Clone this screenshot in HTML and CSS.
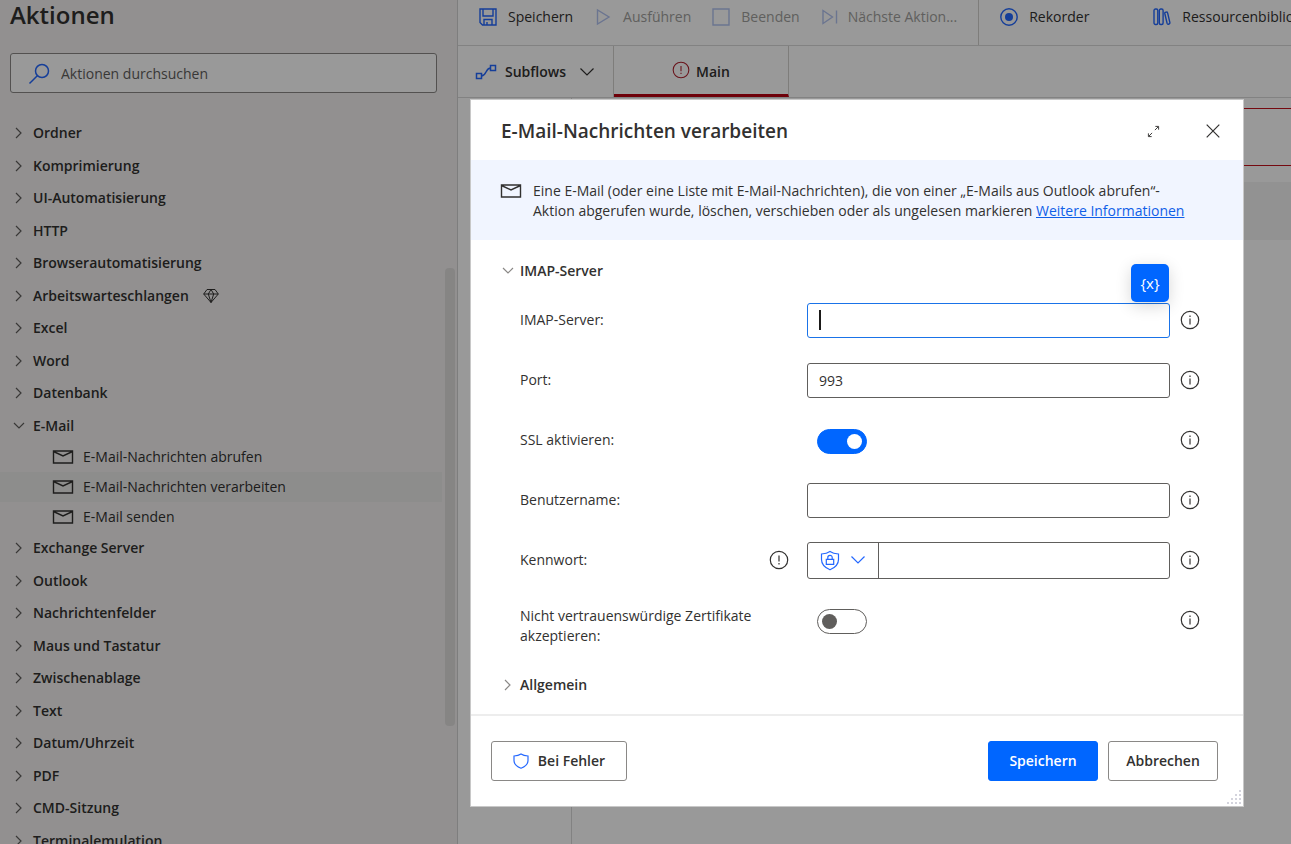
FILE: index.html
```html
<!DOCTYPE html>
<html lang="de">
<head>
<meta charset="utf-8">
<meta name="viewport" content="width=device-width, initial-scale=1">
<title>E-Mail-Nachrichten verarbeiten</title>
<link rel="stylesheet" href="styles.css">
</head>
<body>
<svg class="sprite" aria-hidden="true">
  <symbol id="chev-right" viewBox="0 0 12 12"><path d="M3 1 8 6l-5 5"/></symbol>
  <symbol id="chev-down" viewBox="0 0 12 12"><path d="M1 3 6 8l5-5"/></symbol>
  <symbol id="mail" viewBox="0 0 22 14"><path d="M1.500 1h19v12h-19zM1.500 1.500 11 6l9.500-4.500"/></symbol>
  <symbol id="info" viewBox="0 0 20 20"><circle cx="10" cy="10" r="8.700"/><path d="M10 8.500v6M10 5.500v1.500"/></symbol>
  <symbol id="warn" viewBox="0 0 20 20"><circle cx="10" cy="10" r="8.700"/><path d="M10 5.500v6M10 13v1.500"/></symbol>
</svg>

<div class="app">
  <aside class="sidebar">
    <h1 class="sidebar-title">Aktionen</h1>
    <label class="search">
      <svg class="search-icon" viewBox="0 0 22 22"><circle cx="14" cy="8" r="6.500"/><path d="M9.300 12.700 1.500 20.500"/></svg>
      <input type="search" placeholder="Aktionen durchsuchen" aria-label="Aktionen durchsuchen">
    </label>
    <ul class="tree">
      <li><button class="node"><svg class="chev"><use href="#chev-right"/></svg>Ordner</button></li>
      <li><button class="node"><svg class="chev"><use href="#chev-right"/></svg>Komprimierung</button></li>
      <li><button class="node"><svg class="chev"><use href="#chev-right"/></svg>UI-Automatisierung</button></li>
      <li><button class="node"><svg class="chev"><use href="#chev-right"/></svg>HTTP</button></li>
      <li><button class="node"><svg class="chev"><use href="#chev-right"/></svg>Browserautomatisierung</button></li>
      <li><button class="node"><svg class="chev"><use href="#chev-right"/></svg>Arbeitswarteschlangen<svg class="gem" viewBox="0 0 16 16"><path d="M4 1.500h8L15.300 6 8 14.500.7 6zM.7 6h14.600M5.300 6 8 14.500 10.700 6M5.300 6 8 1.500 10.700 6"/></svg></button></li>
      <li><button class="node"><svg class="chev"><use href="#chev-right"/></svg>Excel</button></li>
      <li><button class="node"><svg class="chev"><use href="#chev-right"/></svg>Word</button></li>
      <li><button class="node"><svg class="chev"><use href="#chev-right"/></svg>Datenbank</button></li>
      <li>
        <button class="node" aria-expanded="true"><svg class="chev"><use href="#chev-down"/></svg>E-Mail</button>
        <ul class="subtree">
          <li><button class="leaf"><svg class="mail"><use href="#mail"/></svg>E-Mail-Nachrichten abrufen</button></li>
          <li><button class="leaf selected"><svg class="mail"><use href="#mail"/></svg>E-Mail-Nachrichten verarbeiten</button></li>
          <li><button class="leaf"><svg class="mail"><use href="#mail"/></svg>E-Mail senden</button></li>
        </ul>
      </li>
      <li><button class="node"><svg class="chev"><use href="#chev-right"/></svg>Exchange Server</button></li>
      <li><button class="node"><svg class="chev"><use href="#chev-right"/></svg>Outlook</button></li>
      <li><button class="node"><svg class="chev"><use href="#chev-right"/></svg>Nachrichtenfelder</button></li>
      <li><button class="node"><svg class="chev"><use href="#chev-right"/></svg>Maus und Tastatur</button></li>
      <li><button class="node"><svg class="chev"><use href="#chev-right"/></svg>Zwischenablage</button></li>
      <li><button class="node"><svg class="chev"><use href="#chev-right"/></svg>Text</button></li>
      <li><button class="node"><svg class="chev"><use href="#chev-right"/></svg>Datum/Uhrzeit</button></li>
      <li><button class="node"><svg class="chev"><use href="#chev-right"/></svg>PDF</button></li>
      <li><button class="node"><svg class="chev"><use href="#chev-right"/></svg>CMD-Sitzung</button></li>
      <li><button class="node"><svg class="chev"><use href="#chev-right"/></svg>Terminalemulation</button></li>
    </ul>
    <div class="scroll-thumb"></div>
  </aside>

  <main class="designer">
    <div class="toolbar">
      <div class="tool-group">
        <button class="tool"><svg class="tool-icon" viewBox="0 0 18 18"><path d="M1 1h16v16H3.500L1 14.500zM4 1v7h10V1M5 17v-5.500h8V17M8 17v-3"/></svg>Speichern</button>
        <button class="tool" disabled><svg class="tool-icon" viewBox="0 0 18 18"><path d="M3.500 2v14L15 9z"/></svg>Ausführen</button>
        <button class="tool" disabled><svg class="tool-icon" viewBox="0 0 18 18"><path d="M1 1h16v16H1z"/></svg>Beenden</button>
        <button class="tool narrow" disabled><svg class="tool-icon" viewBox="0 0 18 18"><path d="M2 2.500v13L11.500 9zM15.500 2.500v13"/></svg>Nächste Aktion...</button>
      </div>
      <div class="tool-group extra">
        <button class="tool"><svg class="tool-icon" viewBox="0 0 18 18"><circle cx="9" cy="9" r="8.200"/><circle class="dot" cx="9" cy="9" r="4"/></svg>Rekorder</button>
        <button class="tool"><svg class="tool-icon" viewBox="0 0 18 18"><rect x="1" y="1" width="3.800" height="15.500" rx="1.500"/><rect x="6.300" y="1" width="3.800" height="15.500" rx="1.500"/><path d="M11.800 5.500q-.2-1 .8-1.200l.8-.2q1-.2 1.200.8l2.300 9.800q.2 1-.8 1.300l-.7.200q-1 .2-1.300-.8z"/></svg>Ressourcenbibliothek</button>
      </div>
    </div>
    <div class="tabs">
      <button class="subflows"><svg class="flow-icon" viewBox="0 0 22 16"><path d="M1.500 9.500h5v5h-5zM15.500 1.500h5v5h-5zM6.500 12c5 0 4-8 9-8"/></svg>Subflows<svg class="subflow-chev" viewBox="0 0 16 10"><path d="M1.500 1.500 8 8l6.500-6.500"/></svg></button>
      <button class="tab"><svg class="tab-icon" viewBox="0 0 20 20"><use href="#warn"/></svg>Main</button>
    </div>
    <div class="workspace">
      <div class="gutter"></div>
      <div class="canvas">
        <div class="step error"></div>
        <div class="step"></div>
      </div>
    </div>
  </main>
</div>

<div class="backdrop">
  <form class="dialog" role="dialog" aria-labelledby="dlg-title">
    <header class="dialog-head">
      <h2 class="dialog-title" id="dlg-title">E-Mail-Nachrichten verarbeiten</h2>
      <button type="button" class="icon-btn" aria-label="Maximieren"><svg class="expand" viewBox="0 0 14 14"><path d="M8.500 5.500 12 2M2 12l3.500-3.500M9 1.500h3.500V5M1.500 9v3.500H5"/></svg></button>
      <button type="button" class="icon-btn" aria-label="Schließen"><svg class="close" viewBox="0 0 14 14"><path d="M.7.7l12.600 12.600M13.300.7.7 13.300"/></svg></button>
    </header>
    <div class="intro">
      <svg class="mail"><use href="#mail"/></svg>
      <p class="intro-text">Eine E-Mail (oder eine Liste mit E-Mail-Nachrichten), die von einer „E-Mails aus Outlook abrufen“-Aktion abgerufen wurde, löschen, verschieben oder als ungelesen markieren <a href="#">Weitere Informationen</a></p>
    </div>
    <div class="dialog-body">
      <button type="button" class="section first" aria-expanded="true"><svg class="chev"><use href="#chev-down"/></svg>IMAP-Server</button>
      <div class="row">
        <label class="label" for="imap">IMAP-Server:</label>
        <div class="control">
          <input class="box focused" id="imap" type="text">
          <span class="caret"></span>
          <button type="button" class="var-btn" aria-label="Variable auswählen">{x}</button>
        </div>
        <svg class="info"><use href="#info"/></svg>
      </div>
      <div class="row">
        <label class="label" for="port">Port:</label>
        <div class="control"><input class="box" id="port" type="text" value="993"></div>
        <svg class="info"><use href="#info"/></svg>
      </div>
      <div class="row">
        <label class="label" for="ssl">SSL aktivieren:</label>
        <div class="control"><input class="switch" id="ssl" type="checkbox" role="switch" checked></div>
        <svg class="info"><use href="#info"/></svg>
      </div>
      <div class="row">
        <label class="label" for="user">Benutzername:</label>
        <div class="control"><input class="box" id="user" type="text"></div>
        <svg class="info"><use href="#info"/></svg>
      </div>
      <div class="row">
        <div class="label with-warn"><label for="pass">Kennwort:</label><svg class="info"><use href="#warn"/></svg></div>
        <div class="control secret">
          <button type="button" class="secret-btn" aria-label="Eingabeart"><svg class="lock" viewBox="0 0 20 20"><path d="M10 1c2.500 1.700 5 2.300 8.500 2.500V9c0 5-3 8-8.500 10.300C4.500 17 1.500 14 1.500 9V3.500C5 3.300 7.500 2.700 10 1zM6.300 8.800h7.400v5H6.300zM7.800 8.800V7a2.200 2.200 0 0 1 4.400 0v1.800"/></svg><svg class="lock-chev" viewBox="0 0 16 10"><path d="M1.500 1.500 8 8l6.500-6.500"/></svg></button>
          <input class="secret-input" id="pass" type="password">
        </div>
        <svg class="info"><use href="#info"/></svg>
      </div>
      <div class="row">
        <label class="label two-line" for="cert">Nicht vertrauenswürdige Zertifikate akzeptieren:</label>
        <div class="control"><input class="switch" id="cert" type="checkbox" role="switch"></div>
        <svg class="info"><use href="#info"/></svg>
      </div>
      <button type="button" class="section last"><svg class="chev"><use href="#chev-right"/></svg>Allgemein</button>
    </div>
    <footer class="dialog-foot">
      <button type="button" class="btn on-error"><svg class="shield" viewBox="0 0 16 16"><path d="M8 1c2 1.300 4 1.800 7 2v4.500c0 4-2.500 6-7 7.700C3.500 13.500 1 11.500 1 7.500V3c3-.2 5-.7 7-2z"/></svg>Bei Fehler</button>
      <button type="button" class="btn primary">Speichern</button>
      <button type="button" class="btn">Abbrechen</button>
    </footer>
    <svg class="grip" viewBox="0 0 14 14"><path d="M12 0h2v2h-2zM8 4h2v2H8zM12 4h2v2h-2zM4 8h2v2H4zM8 8h2v2H8zM12 8h2v2h-2zM0 12h2v2H0zM4 12h2v2H4zM8 12h2v2H8zM12 12h2v2h-2z"/></svg>
  </form>
</div>
</body>
</html>
```
FILE: styles.css
```css
* { box-sizing: border-box; }

body {
  margin: 0;
  overflow: hidden;
  font: 14px/20px "Segoe UI", "Open Sans", "Noto Sans", sans-serif;
  color: #323130;
}

button, input { font: inherit; color: inherit; }
button { margin: 0; padding: 0; border: 0; background: none; text-align: left; }
ul { margin: 0; padding: 0; list-style: none; }
svg { flex: none; fill: none; stroke: currentColor; stroke-width: 1.2; }
.sprite { position: absolute; width: 0; height: 0; }

.app { display: flex; height: 100vh; overflow: hidden; background: #fff; }

/* Action list */
.sidebar {
  position: relative;
  flex: none;
  width: 458px;
  overflow: hidden;
  border-right: 1px solid #d2d2d2;
  background: #f3f1f1;
}
.sidebar-title { margin: 0; padding: 0 10px 2px; font-size: 24px; line-height: 30px; font-weight: 600; }
.search {
  display: flex;
  align-items: center;
  gap: 11px;
  height: 40px;
  margin: 21px 20px 24px 10px;
  padding: 1px 17px 0;
  border: 1px solid #8a8886;
  border-radius: 3px;
  background: #fff;
}
.search input { flex: 1; min-width: 0; padding: 0; border: 0; outline: 0; background: none; }
.search input::placeholder { color: #605e5c; opacity: 1; }
.search-icon { width: 22px; height: 22px; color: #2468ff; stroke-width: 1.5; }

.node {
  display: flex;
  align-items: center;
  width: 100%;
  height: 32px;
  padding-left: 13px;
  gap: 8px;
  font-weight: 600;
}
.tree > li:nth-child(even) > .node { height: 33px; }
.chev { width: 12px; height: 12px; color: #605e5c; }
.gem { width: 16px; height: 16px; margin-left: 6px; stroke-width: 1; }
.leaf { display: flex; align-items: center; gap: 9px; width: 442px; height: 30px; padding-left: 52px; }
.leaf.selected { background: #ebebea; }
.mail { width: 22px; height: 14px; stroke-width: 1.4; }
.scroll-thumb {
  position: absolute;
  top: 268px;
  right: 2px;
  width: 10px;
  height: 458px;
  border-radius: 4px;
  background: #e0dedd;
}

/* Designer */
.designer { display: flex; flex: 1; flex-direction: column; min-width: 0; }
.toolbar { display: flex; flex: none; height: 46px; overflow: hidden; border-bottom: 1px solid #d9d9d9; }
.tool-group { display: flex; flex: none; gap: 21px; padding: 0 21px 12px; }
.tool-group.extra { gap: 64px; border-left: 1px solid #d2d0ce; }
.tool { display: flex; align-items: center; gap: 11px; white-space: nowrap; }
.tool.narrow { gap: 9px; }
.tool:disabled { color: #a19f9d; }
.tool-icon { width: 18px; height: 18px; color: #2468ff; stroke-width: 1.4; }
.tool:disabled .tool-icon { color: #b3c3f0; }
.dot { fill: currentColor; stroke: none; }

.tabs { display: flex; flex: none; height: 52px; border-bottom: 1px solid #d9d9d9; font-weight: 600; }
.subflows { display: flex; align-items: center; gap: 8px; width: 156px; padding: 1px 0 0 17px; border-right: 1px solid #d2d0ce; font-weight: 600; }
.flow-icon { width: 22px; height: 16px; color: #2468ff; stroke-width: 1.5; }
.subflow-chev { width: 16px; height: 10px; margin-left: 5px; }
.tab {
  display: flex;
  align-items: center;
  justify-content: center;
  gap: 6px;
  width: 175px;
  padding-top: 3px;
  border-right: 1px solid #d2d0ce;
  border-bottom: 3px solid #b8000f;
  font-weight: 600;
}
.tab-icon { width: 18px; height: 18px; margin-bottom: 4px; color: #b0202c; }

.workspace { display: flex; flex: 1; }
.gutter { flex: none; width: 114px; border-right: 1px solid #d9d9d9; }
.canvas { display: flex; flex: 1; flex-direction: column; gap: 16px; padding: 10px 0 0 24px; }
.step { height: 58px; background: #f3f3f3; }
.step.error { border: solid #c4101c; border-width: 1px 0 1px 1px; background: none; }

/* Dialog */
.backdrop {
  position: fixed;
  inset: 0;
  display: flex;
  align-items: flex-start;
  padding: 99px 47px 0 470px;
  background: rgba(0, 0, 0, .4);
}
.dialog { position: relative; flex: 1; min-width: 0; border: 1px solid #c8c8c8; background: #fff; }
.dialog-head { display: flex; align-items: center; gap: 36px; height: 60px; padding: 2px 22px 0 30px; }
.dialog-title { flex: 1; margin: 0; font-size: 19px; line-height: 26px; font-weight: 600; }
.icon-btn { display: grid; place-items: center; width: 16px; height: 24px; }
.icon-btn + .icon-btn { margin-left: 8px; }
.expand { width: 13px; height: 13px; stroke-width: 1; }
.close { width: 14px; height: 14px; }

.intro { display: flex; gap: 11px; padding: 21px 44px 19px 29px; background: #f1f5ff; }
.intro .mail { margin-top: 3px; }
.intro-text { margin: 0; }
.intro a { color: #0f5fe8; }

.dialog-body { padding: 16px 43px 14px 31px; border-bottom: 2px solid #ededed; }
.section { display: flex; align-items: center; gap: 6px; height: 30px; font-weight: 600; }
.section.first { margin-bottom: 4px; }
.section.last { margin-top: 20px; }
.section .chev { color: #8a8886; }
.row {
  display: grid;
  grid-template-columns: 287px 1fr 20px;
  column-gap: 10px;
  align-items: center;
  min-height: 60px;
  padding-left: 18px;
}
.label { padding-right: 20px; }
.with-warn { display: flex; align-items: center; justify-content: space-between; padding-right: 18px; }
.two-line { padding-top: 12px; }
.control { position: relative; display: flex; margin-left: -10px; }
.box {
  width: 100%;
  height: 35px;
  padding: 0 11px;
  border: 1px solid #605e5c;
  border-radius: 3px;
  outline: 0;
  background: #fff;
}
.box.focused { border-color: #1a73e8; }
.caret { position: absolute; top: 7px; left: 12px; width: 2px; height: 20px; background: #1b1a19; }
.var-btn {
  position: absolute;
  right: 1px;
  bottom: 36px;
  width: 38px;
  height: 38px;
  border-radius: 5px;
  background: #0066ff;
  color: #fff;
  font-size: 15px;
  font-weight: 500;
  text-align: center;
  box-shadow: 0 4px 16px rgba(0, 0, 0, .16);
}
.info { width: 20px; height: 20px; }

.switch {
  appearance: none;
  display: flex;
  align-items: center;
  width: 50px;
  height: 25px;
  margin: 2px 0 0 10px;
  padding: 0 4px;
  border: 1px solid #605e5c;
  border-radius: 13px;
  background: #fff;
}
.switch::before { content: ""; width: 15px; height: 15px; border-radius: 50%; background: #605e5c; }
.switch:checked { justify-content: flex-end; border-color: #0066ff; background: #0066ff; }
.switch:checked::before { background: #fff; }

.secret { height: 37px; border: 1px solid #605e5c; border-radius: 3px; }
.secret-btn { display: flex; align-items: center; gap: 10px; width: 71px; padding-left: 12px; border-right: 1px solid #605e5c; color: #2468ff; }
.lock { width: 20px; height: 21px; }
.lock-chev { width: 16px; height: 10px; }
.secret-input { flex: 1; min-width: 0; padding: 0 11px; border: 0; outline: 0; background: none; }

.dialog-foot { display: flex; gap: 10px; padding: 25px 25px 25px 20px; }
.btn {
  display: flex;
  align-items: center;
  justify-content: center;
  width: 110px;
  height: 40px;
  border: 1px solid #8a8886;
  border-radius: 3px;
  background: #fff;
  font-weight: 600;
}
.on-error { gap: 9px; width: 136px; margin-right: auto; }
.primary { border-color: #0066ff; background: #0066ff; color: #fff; }
.shield { width: 16px; height: 16px; color: #2468ff; }
.grip { position: absolute; right: 2px; bottom: 2px; width: 14px; height: 14px; fill: #b4b4c4; stroke: #fff; stroke-width: .5; }
```
